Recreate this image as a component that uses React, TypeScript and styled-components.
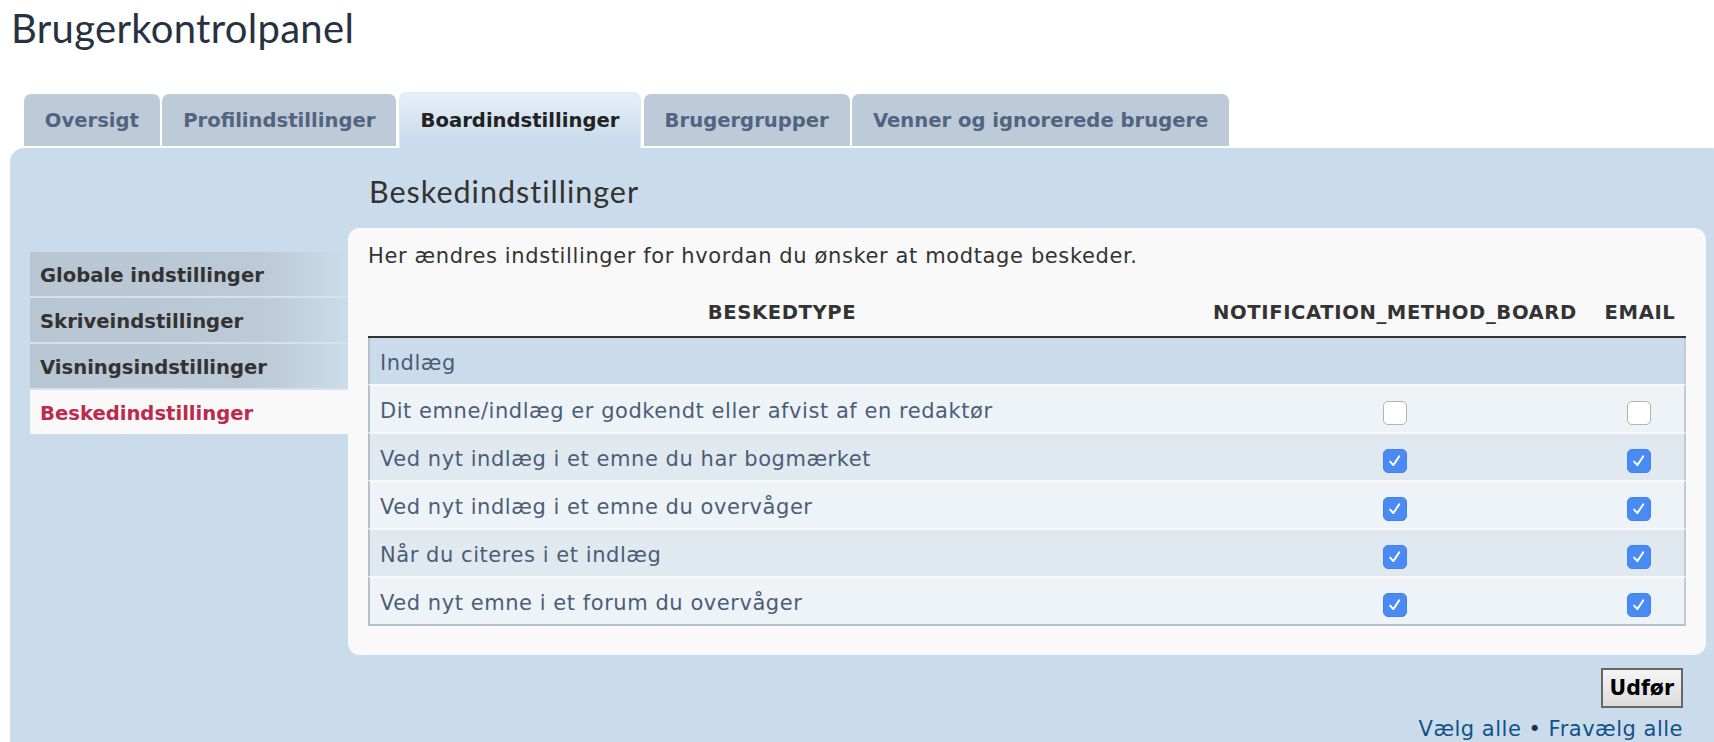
import React from "react";
import styled, { createGlobalStyle } from "styled-components";

const GlobalStyle = createGlobalStyle`
  html, body { margin: 0; padding: 0; background: #ffffff; overflow: hidden; }
  body { font-family: "DejaVu Sans", Verdana, sans-serif; color: #333333; }
  * { box-sizing: border-box; }
`;

const Page = styled.div`
  width: 1714px;
  padding: 4px 0 0 10px;
`;

const Title = styled.h2`
  margin: 0;
  padding-left: 1px;
  font-family: Lato, "Open Sans", sans-serif;
  font-weight: 400;
  font-size: 40px;
  letter-spacing: 0.3px;
  line-height: 48px;
  color: #28313f;
`;

const TabBar = styled.ul`
  list-style: none;
  margin: 40px 0 0;
  padding: 0 0 0 14px;
  display: flex;
  align-items: flex-end;
  gap: 2.6px;
`;

const Tab = styled.li<{ $active?: boolean }>`
  display: flex;
  align-items: center;
  height: ${(p) => (p.$active ? 56 : 52)}px;
  margin-bottom: ${(p) => (p.$active ? 0 : 2)}px;
  padding: 0 20.8px;
  border-radius: 7px 7px 0 0;
  font-weight: 700;
  font-size: 19.6px;
  white-space: nowrap;
  color: ${(p) => (p.$active ? "#222222" : "#536482")};
  background: ${(p) =>
    p.$active ? "linear-gradient(#e7f0f8, #cadceb 85%)" : "#bdcad7"};
  border: ${(p) => (p.$active ? "1px solid #e2eaf2" : "0")};
  border-bottom: 0;
`;

const Panel = styled.div`
  display: grid;
  grid-template-columns: 318px 1fr;
  margin-right: -12px;
  padding: 25px 20px 40px;
  background: #cadceb;
  border-radius: 14px 14px 0 0;
`;

const Menu = styled.ul`
  list-style: none;
  margin: 79px 0 0;
  padding: 0;
  display: flex;
  flex-direction: column;
`;

const MenuItem = styled.li<{ $active?: boolean }>`
  display: flex;
  align-items: center;
  height: ${(p) => (p.$active ? 44 : 46)}px;
  padding: 2px 0 0 10px;
  border-bottom: ${(p) => (p.$active ? "0" : "2px solid #d6e1eb")};
  font-weight: 700;
  font-size: 19.6px;
  white-space: nowrap;
  color: ${(p) => (p.$active ? "#bc2a4d" : "#333333")};
  background: ${(p) =>
    p.$active
      ? "#f9f9f9"
      : "linear-gradient(to right, #b8c5d2 0%, #bcc9d6 72%, #cadceb 100%)"};
`;

const Main = styled.div`
  display: flex;
  flex-direction: column;
`;

const Heading = styled.h3`
  margin: 0 0 19px 21px;
  font-family: Lato, "Open Sans", sans-serif;
  font-weight: 400;
  font-size: 30.5px;
  letter-spacing: 1px;
  line-height: 36px;
  color: #333333;
`;

const ContentBox = styled.div`
  padding: 13px 20px 29px;
  background: #f9f9f9;
  border-radius: 12px;
`;

const Intro = styled.p`
  margin: 0;
  font-size: 21px;
  letter-spacing: 0.62px;
  line-height: 30px;
  color: #333333;
`;

const Table = styled.table`
  width: 100%;
  margin-top: 29px;
  border-collapse: separate;
  border-spacing: 0;
`;

const Th = styled.th<{ $w?: number }>`
  ${(p) => (p.$w ? `width: ${p.$w}px;` : "")}
  padding: 0 4px 10px;
  border-bottom: 2px solid #333333;
  font-weight: 700;
  font-size: 19.6px;
  letter-spacing: 0.6px;
  line-height: 26px;
  text-transform: uppercase;
  text-align: center;
  white-space: nowrap;
  color: #333333;
`;

const Row = styled.tr<{ $tone: "head" | "light" | "dark" }>`
  background: ${(p) =>
    p.$tone === "head" ? "#cadceb" : p.$tone === "light" ? "#eef3f7" : "#e1e9f0"};
`;

const Td = styled.td<{ $first?: boolean; $last?: boolean; $gap?: boolean; $end?: boolean; $center?: boolean }>`
  padding: 10px 10px 6px;
  font-size: 21px;
  letter-spacing: 0.55px;
  line-height: 30px;
  color: #4c5d77;
  vertical-align: top;
  text-align: ${(p) => (p.$center ? "center" : "left")};
  border-top: ${(p) => (p.$gap ? "2px solid #f9f9f9" : "0")};
  border-left: ${(p) => (p.$first ? "2px solid #b7bfcd" : "0")};
  border-right: ${(p) => (p.$last ? "2px solid #c3cad6" : "0")};
  border-bottom: ${(p) => (p.$end ? "2px solid #b7bfcd" : "0")};
`;

const BoxCell = styled.div`
  height: 30px;
  display: flex;
  justify-content: center;
  align-items: flex-start;
`;

const Box = styled.span<{ $checked: boolean }>`
  display: flex;
  align-items: center;
  justify-content: center;
  width: 24px;
  height: 24px;
  margin-top: 5px;
  border-radius: 5px;
  background: ${(p) => (p.$checked ? "#4a8af4" : "#ffffff")};
  border: 1px solid ${(p) => (p.$checked ? "#4483ee" : "#b3b3b3")};
`;

const Footer = styled.div`
  display: flex;
  flex-direction: column;
  align-items: flex-end;
  padding-right: 23px;
`;

const SubmitButton = styled.button`
  height: 40px;
  margin-top: 13px;
  padding: 0 7px;
  border: 2px solid #666666;
  border-radius: 0;
  background: linear-gradient(#f5f5f5, #dcdcdc);
  font-family: "DejaVu Sans", Verdana, sans-serif;
  font-weight: 700;
  font-size: 20.5px;
  color: #000000;
`;

const Links = styled.div`
  margin-top: 6px;
  font-size: 21px;
  letter-spacing: 0.5px;
  line-height: 30px;
  white-space: nowrap;
`;

const Link = styled.a`
  color: #105289;
  text-decoration: none;
`;

const Sep = styled.span`
  color: #28313f;
`;

function Checkbox({ checked }: { checked: boolean }) {
  return (
    <Box $checked={checked}>
      {checked && (
        <svg width="18" height="18" viewBox="0 0 24 24" fill="none">
          <path
            d="M5.5 12.8 L9.8 17.5 L17.6 5.8"
            stroke="#ffffff"
            strokeWidth="2.6"
            strokeLinecap="round"
            strokeLinejoin="round"
          />
        </svg>
      )}
    </Box>
  );
}

const tabs = [
  "Oversigt",
  "Profilindstillinger",
  "Boardindstillinger",
  "Brugergrupper",
  "Venner og ignorerede brugere",
];

const menu = [
  "Globale indstillinger",
  "Skriveindstillinger",
  "Visningsindstillinger",
  "Beskedindstillinger",
];

const rows = [
  { label: "Dit emne/indlæg er godkendt eller afvist af en redaktør", board: false, email: false },
  { label: "Ved nyt indlæg i et emne du har bogmærket", board: true, email: true },
  { label: "Ved nyt indlæg i et emne du overvåger", board: true, email: true },
  { label: "Når du citeres i et indlæg", board: true, email: true },
  { label: "Ved nyt emne i et forum du overvåger", board: true, email: true },
];

export default function App() {
  return (
    <>
      <GlobalStyle />
      <Page>
        <Title>Brugerkontrolpanel</Title>
        <TabBar>
          {tabs.map((t) => (
            <Tab key={t} $active={t === "Boardindstillinger"}>
              {t}
            </Tab>
          ))}
        </TabBar>
        <Panel>
          <Menu>
            {menu.map((m) => (
              <MenuItem key={m} $active={m === "Beskedindstillinger"}>
                {m}
              </MenuItem>
            ))}
          </Menu>
          <Main>
            <Heading>Beskedindstillinger</Heading>
            <ContentBox>
              <Intro>Her ændres indstillinger for hvordan du ønsker at modtage beskeder.</Intro>
              <Table>
                <thead>
                  <tr>
                    <Th>Beskedtype</Th>
                    <Th $w={398}>notification_method_board</Th>
                    <Th $w={92}>Email</Th>
                  </tr>
                </thead>
                <tbody>
                  <Row $tone="head">
                    <Td colSpan={3} $first $last>
                      Indlæg
                    </Td>
                  </Row>
                  {rows.map((r, i) => {
                    const end = i === rows.length - 1;
                    return (
                      <Row key={r.label} $tone={i % 2 === 0 ? "light" : "dark"}>
                        <Td $first $gap $end={end}>
                          {r.label}
                        </Td>
                        <Td $gap $end={end} $center>
                          <BoxCell>
                            <Checkbox checked={r.board} />
                          </BoxCell>
                        </Td>
                        <Td $gap $end={end} $last $center>
                          <BoxCell>
                            <Checkbox checked={r.email} />
                          </BoxCell>
                        </Td>
                      </Row>
                    );
                  })}
                </tbody>
              </Table>
            </ContentBox>
            <Footer>
              <SubmitButton type="button">Udfør</SubmitButton>
              <Links>
                <Link href="#">Vælg alle</Link>
                <Sep> • </Sep>
                <Link href="#">Fravælg alle</Link>
              </Links>
            </Footer>
          </Main>
        </Panel>
      </Page>
    </>
  );
}
